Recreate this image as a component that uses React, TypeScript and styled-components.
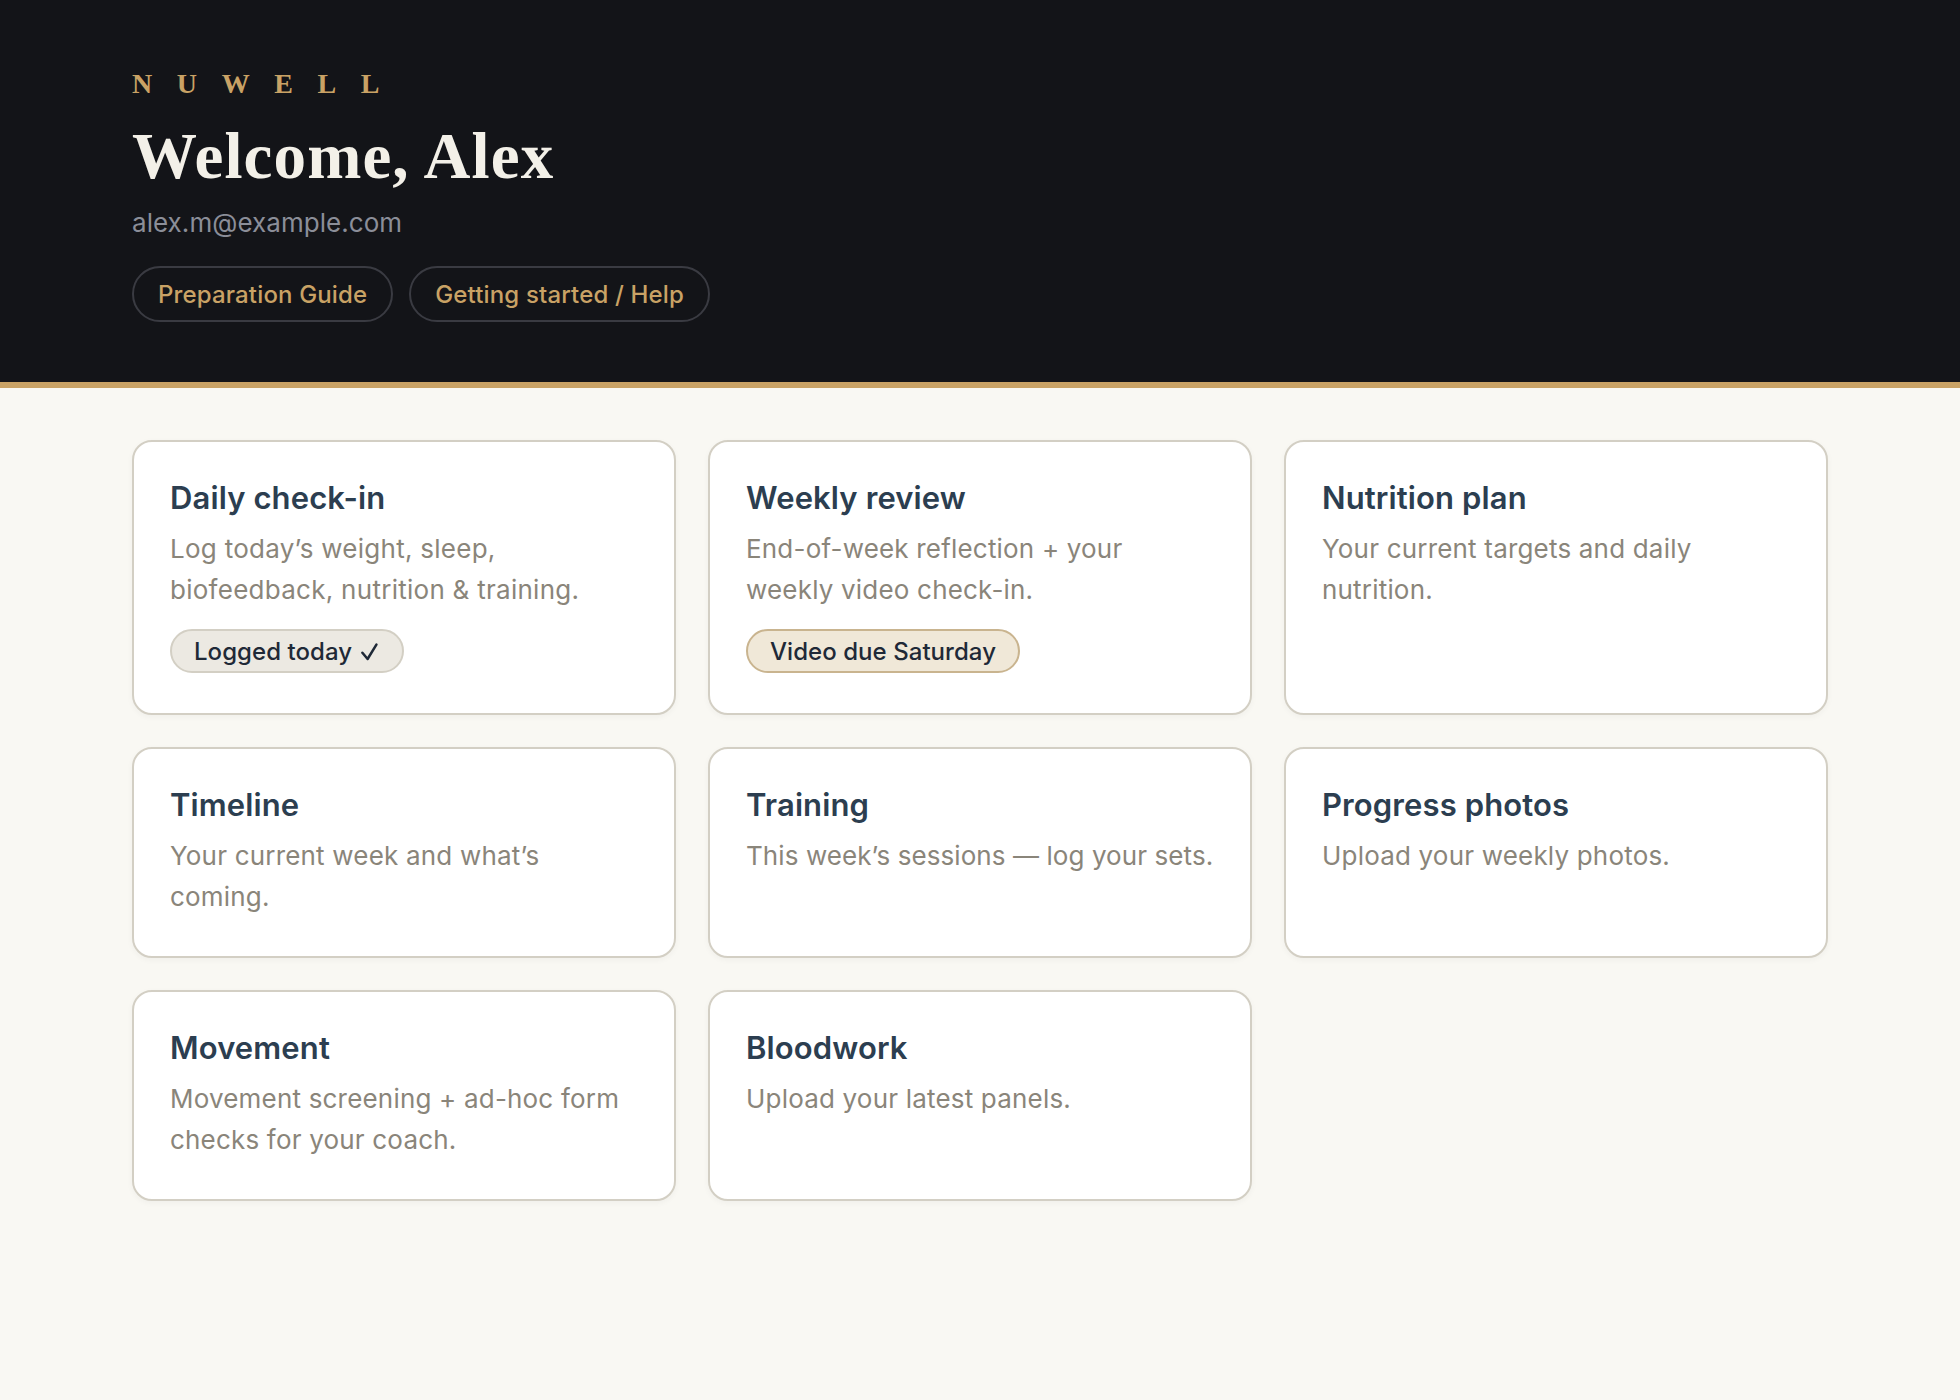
import React from "react";
import styled, { createGlobalStyle } from "styled-components";

const GlobalStyle = createGlobalStyle`
  * { box-sizing: border-box; }
  body {
    margin: 0;
    background: #f9f8f3;
    font-family: Inter, "Liberation Sans", sans-serif;
  }
`;

const Page = styled.div`
  min-height: 1400px;
  background: #f9f8f3;
`;

const Header = styled.header`
  height: 388px;
  padding: 66px 132px 0;
  background: #131418;
  border-bottom: 6px solid #c9a265;
`;

const Brand = styled.div`
  height: 34px;
  line-height: 35px;
  font-family: "Liberation Serif", serif;
  font-size: 28px;
  font-weight: 700;
  letter-spacing: 24.6px;
  color: #c9a265;
`;

const Heading = styled.h1`
  margin: 18px 0 0;
  height: 76px;
  line-height: 76px;
  font-family: "Liberation Serif", serif;
  font-size: 65px;
  font-weight: 700;
  letter-spacing: 1.1px;
  color: #f3f0e8;
`;

const Email = styled.div`
  margin-top: 9px;
  height: 40px;
  line-height: 40px;
  font-size: 26px;
  letter-spacing: 0.05px;
  color: #8b8e98;
`;

const Links = styled.nav`
  display: flex;
  gap: 16px;
  margin-top: 23px;
`;

const PillLink = styled.a`
  display: flex;
  align-items: center;
  height: 56px;
  padding: 0 24px;
  border: 2px solid #3a3b42;
  border-radius: 28px;
  font-size: 24px;
  font-weight: 500;
  letter-spacing: 0.15px;
  color: #c9a265;
  white-space: nowrap;
`;

const Grid = styled.main`
  display: grid;
  grid-template-columns: repeat(3, 1fr);
  gap: 32px;
  padding: 52px 132px;
`;

const Card = styled.section`
  min-height: 211px;
  padding: 36px;
  background: #fff;
  border: 2px solid #d3cfc4;
  border-radius: 20px;
  box-shadow: 0 2px 6px rgba(19, 20, 24, 0.04);
`;

const Title = styled.h2`
  margin: 0 0 11px;
  line-height: 39px;
  font-size: 31px;
  font-weight: 600;
  letter-spacing: 0.12px;
  color: #2c3e50;
`;

const Description = styled.p<{ $tracking?: number }>`
  margin: 0;
  line-height: 41px;
  font-size: 26px;
  letter-spacing: ${(p) => p.$tracking ?? 0.19}px;
  color: #8a857a;
`;

const Badge = styled.span<{ $due?: boolean }>`
  display: flex;
  align-items: center;
  width: fit-content;
  height: 44px;
  margin: 19px 0 4px;
  padding: 1px 22px 0;
  border: 2px solid ${(p) => (p.$due ? "#c9b48f" : "#d3cfc4")};
  border-radius: 22px;
  background: ${(p) => (p.$due ? "#f0e8d8" : "#ece9e2")};
  font-size: 24px;
  font-weight: 500;
  letter-spacing: 0.05px;
  color: #1f2937;
  white-space: nowrap;
`;

const Check = styled.svg`
  width: 17px;
  height: 18px;
  margin: 0 2px 0 9px;
`;

type Item = { title: string; text: string; badge?: string; done?: boolean; tracking?: number };

const items: Item[] = [
  { title: "Daily check-in", text: "Log today’s weight, sleep, biofeedback, nutrition & training.", badge: "Logged today", done: true, tracking: 0.27 },
  { title: "Weekly review", text: "End-of-week reflection + your weekly video check-in.", badge: "Video due Saturday" },
  { title: "Nutrition plan", text: "Your current targets and daily nutrition." },
  { title: "Timeline", text: "Your current week and what’s coming." },
  { title: "Training", text: "This week’s sessions — log your sets.", tracking: 0.08 },
  { title: "Progress photos", text: "Upload your weekly photos." },
  { title: "Movement", text: "Movement screening + ad-hoc form checks for your coach." },
  { title: "Bloodwork", text: "Upload your latest panels." },
];

export default function App() {
  return (
    <Page>
      <GlobalStyle />
      <Header>
        <Brand>NUWELL</Brand>
        <Heading>Welcome, Alex</Heading>
        <Email>alex.m@example.com</Email>
        <Links>
          <PillLink>Preparation Guide</PillLink>
          <PillLink>Getting started / Help</PillLink>
        </Links>
      </Header>
      <Grid>
        {items.map((item) => (
          <Card key={item.title}>
            <Title>{item.title}</Title>
            <Description $tracking={item.tracking}>{item.text}</Description>
            {item.badge && (
              <Badge $due={!item.done}>
                {item.badge}
                {item.done && (
                  <Check viewBox="0 0 17 18" fill="none" stroke="currentColor" strokeWidth="2.5" strokeLinecap="round" strokeLinejoin="round">
                    <path d="M1.4 9.8 6.6 16 15.4 1.6" />
                  </Check>
                )}
              </Badge>
            )}
          </Card>
        ))}
      </Grid>
    </Page>
  );
}
